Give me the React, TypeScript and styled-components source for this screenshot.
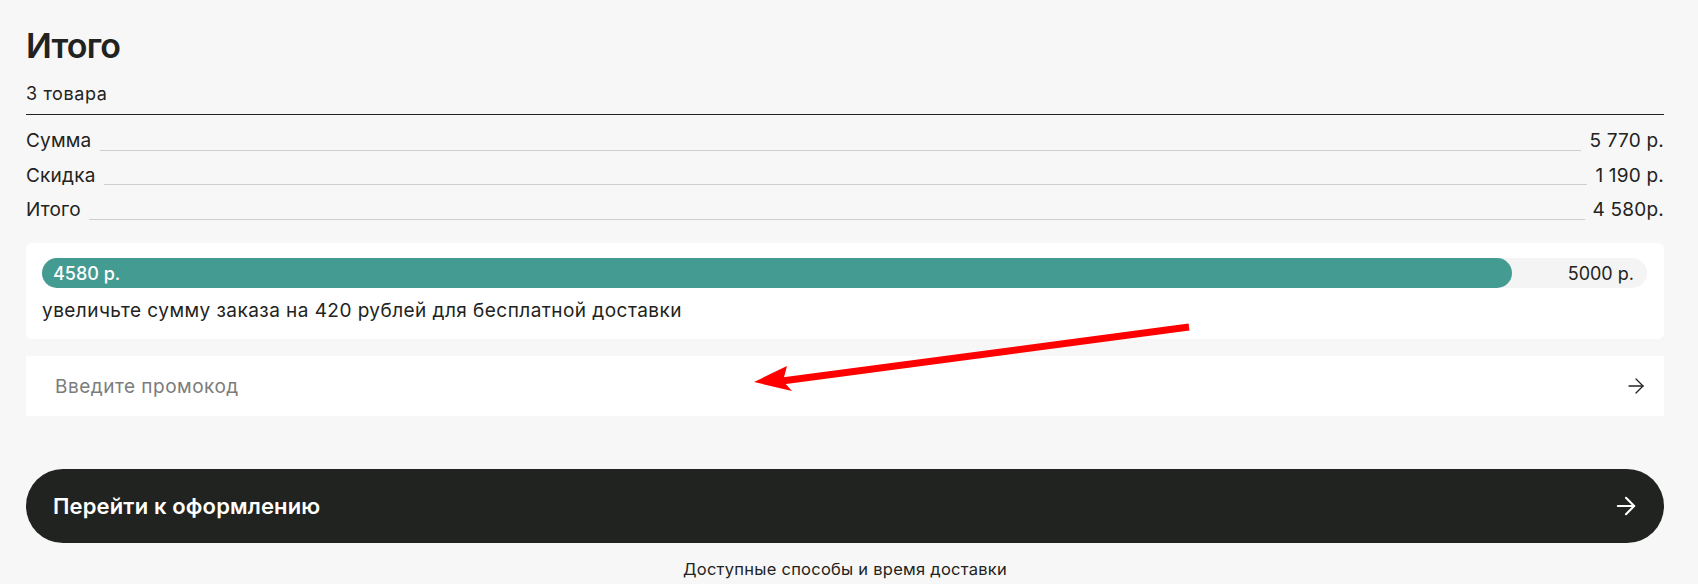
import React from 'react';
import styled, { createGlobalStyle } from 'styled-components';
import { ArrowRight } from 'lucide-react';

const GlobalStyle = createGlobalStyle`
  html, body {
    margin: 0;
    padding: 0;
    background: #f7f7f7;
  }
  body {
    font-family: Inter, "Noto Sans", sans-serif;
    color: #222320;
  }
`;

const Page = styled.div`
  position: relative;
  padding: 26px 34px 10px 26px;
  min-height: 584px;
  box-sizing: border-box;
`;

const Title = styled.h1`
  margin: 0;
  font-size: 34px;
  line-height: 40px;
  font-weight: 600;
  letter-spacing: -0.8px;
`;

const Count = styled.div`
  margin-top: 16px;
  font-size: 18px;
  line-height: 24px;
  letter-spacing: 0.6px;
  padding-bottom: 8px;
  border-bottom: 1px solid #222320;
`;

const Rows = styled.div`
  margin-top: 9px;
`;

const Row = styled.div`
  display: flex;
  align-items: flex-end;
  font-size: 19px;
  line-height: 34.5px;
  letter-spacing: 0.2px;
`;

const Filler = styled.span`
  flex: 1;
  height: 1px;
  background: #cfcfcf;
  margin: 0 8px 8px;
`;

const Card = styled.div`
  margin-top: 15.5px;
  background: #fff;
  border-radius: 6px;
  padding: 15px 17px 16.5px 16px;
`;

const Track = styled.div`
  position: relative;
  display: flex;
  justify-content: flex-end;
  align-items: center;
  height: 30px;
  border-radius: 15px;
  background: #f4f4f4;
  padding-right: 13px;
  font-size: 18px;
`;

const Fill = styled.div`
  position: absolute;
  left: 0;
  top: 0;
  bottom: 0;
  display: flex;
  align-items: center;
  padding-left: 11px;
  box-sizing: border-box;
  border-radius: 15px;
  background: #449b92;
  color: #fff;
  font-weight: 500;
`;

const Hint = styled.div`
  margin-top: 10.5px;
  font-size: 19px;
  line-height: 24px;
  letter-spacing: 0.45px;
`;

const Promo = styled.label`
  margin-top: 17px;
  height: 60px;
  display: flex;
  align-items: center;
  background: #fff;
  padding: 0 16px 0 29px;
`;

const PromoInput = styled.input`
  flex: 1;
  border: 0;
  padding: 0;
  outline: none;
  background: transparent;
  font-family: inherit;
  font-size: 19px;
  letter-spacing: 0.5px;
  color: #222320;
  &::placeholder {
    color: #7c7c7c;
  }
`;

const Checkout = styled.button`
  margin-top: 53px;
  width: 100%;
  height: 74px;
  border: 0;
  border-radius: 37px;
  background: #212320;
  color: #fff;
  display: flex;
  align-items: center;
  justify-content: space-between;
  padding: 0 24px 0 27px;
  font-family: inherit;
  font-size: 22px;
  font-weight: 600;
  letter-spacing: 0.15px;
  cursor: pointer;
`;

const Footer = styled.div`
  margin-top: 16px;
  text-align: center;
  font-size: 16.5px;
  line-height: 20px;
  letter-spacing: 0.25px;
`;

const Annotation = styled.svg`
  position: absolute;
  left: 0;
  top: 0;
  pointer-events: none;
`;

const lines = [
  { label: 'Сумма', value: '5 770 р.' },
  { label: 'Скидка', value: '1 190 р.' },
  { label: 'Итого', value: '4 580р.' },
];

export default function App() {
  const total = 4580;
  const goal = 5000;
  return (
    <>
      <GlobalStyle />
      <Page>
        <Title>Итого</Title>
        <Count>3 товара</Count>
        <Rows>
          {lines.map((l) => (
            <Row key={l.label}>
              <span>{l.label}</span>
              <Filler />
              <span>{l.value}</span>
            </Row>
          ))}
        </Rows>
        <Card>
          <Track>
            <Fill style={{ width: `${(total / goal) * 100}%` }}>{total} р.</Fill>
            <span>{goal} р.</span>
          </Track>
          <Hint>увеличьте сумму заказа на 420 рублей для бесплатной доставки</Hint>
        </Card>
        <Promo>
          <PromoInput placeholder="Введите промокод" />
          <ArrowRight size={24} strokeWidth={1.3} color="#222320" />
        </Promo>
        <Checkout>
          <span>Перейти к оформлению</span>
          <ArrowRight size={28} strokeWidth={1.8} color="#fff" />
        </Checkout>
        <Footer>Доступные способы и время доставки</Footer>
        <Annotation width="1698" height="584" viewBox="0 0 1698 584">
          <line x1="1189" y1="327" x2="782" y2="381" stroke="#ff0000" strokeWidth="7" />
          <polygon points="754,382 787,366 783,381 792,391" fill="#ff0000" />
        </Annotation>
      </Page>
    </>
  );
}
